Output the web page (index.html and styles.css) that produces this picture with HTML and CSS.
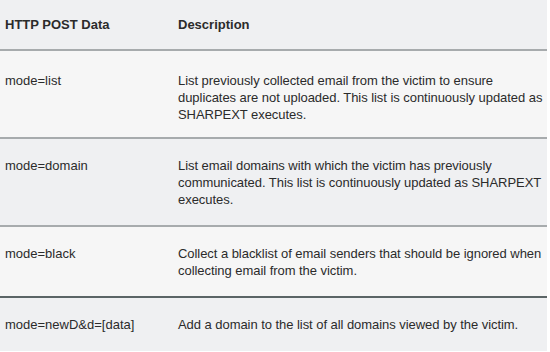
FILE: index.html
```html
<!DOCTYPE html>
<html lang="en">
<head>
  <meta charset="UTF-8">
  <title>HTTP POST Data</title>
  <link rel="stylesheet" href="styles.css">
</head>
<body>

<table class="post-table">
  <thead>
    <tr>
      <th class="col-data">HTTP POST Data</th>
      <th>Description</th>
    </tr>
  </thead>
  <tbody>
    <tr class="row-light row-first">
      <td>mode=list</td>
      <td>List previously collected email from the victim to ensure duplicates are not uploaded. This list is continuously updated as SHARPEXT executes.</td>
    </tr>
    <tr class="row-dark">
      <td>mode=domain</td>
      <td>List email domains with which the victim has previously communicated. This list is continuously updated as SHARPEXT executes.</td>
    </tr>
    <tr class="row-light row-third">
      <td>mode=black</td>
      <td>Collect a blacklist of email senders that should be ignored when collecting email from the victim.</td>
    </tr>
    <tr class="row-dark row-last">
      <td>mode=newD&amp;d=[data]</td>
      <td>Add a domain to the list of all domains viewed by the victim.</td>
    </tr>
  </tbody>
</table>

</body>
</html>
```

FILE: styles.css
```css
* {
  margin: 0;
  padding: 0;
  box-sizing: border-box;
}

body {
  background: #ffffff;
  font-family: "Liberation Sans", Arial, sans-serif;
  font-size: 13px;
  color: #2b2b2b;
}

.post-table {
  width: 547px;
  border-collapse: collapse;
  line-height: 17px;
}

.post-table th,
.post-table td {
  text-align: left;
  vertical-align: top;
  padding: 18px 0 17px 5px;
}

.post-table th {
  font-weight: bold;
  padding-top: 16px;
  padding-bottom: 16px;
  background: #eff0f2;
  border-bottom: 2px solid #a7abad;
}

.post-table .col-data {
  width: 173px;
}

.post-table td:last-child {
  letter-spacing: -0.05px;
}

.row-light td {
  background: #f6f6f6;
  border-bottom: 2px solid #a7abad;
}

.row-dark td {
  background: #eff0f2;
  border-bottom: 2px solid #a7abad;
}

.row-first td {
  padding-top: 21px;
  padding-bottom: 14px;
}

.row-third td {
  border-bottom-color: #5b6566;
}

.row-last td {
  border-bottom: none;
  height: 54px;
}
```
